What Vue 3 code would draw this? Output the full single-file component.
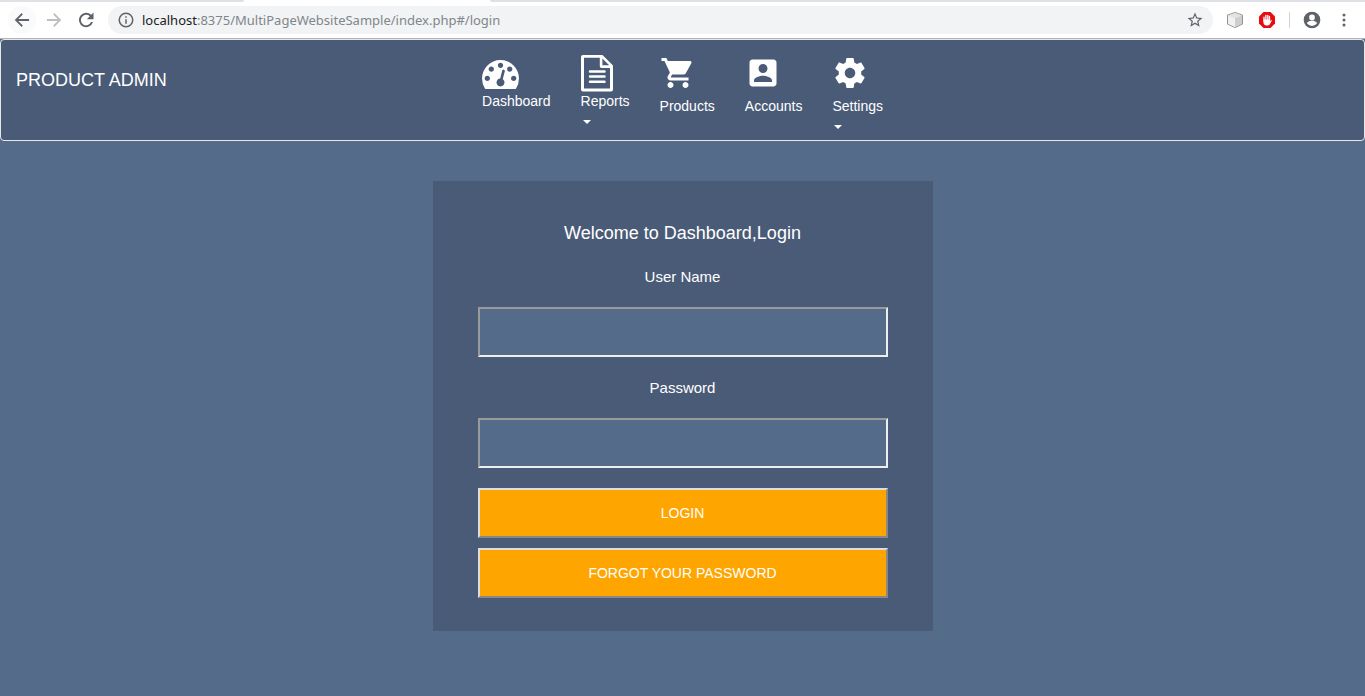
<script setup>
import { ref } from 'vue'

const username = ref('')
const password = ref('')

const navItems = [
  { label: 'Dashboard', icon: 'gauge' },
  { label: 'Reports', icon: 'file', menu: true },
  { label: 'Products', icon: 'cart', material: true },
  { label: 'Accounts', icon: 'account', material: true },
  { label: 'Settings', icon: 'cog', material: true, menu: true },
]
</script>

<template>
  <div class="window">
    <div class="tabstrip"><span class="tab-gap"></span><span class="tab-active"></span><span class="tab-rest"></span></div>
    <div class="toolbar">
      <button class="tool back" type="button" aria-label="Back">
        <svg width="20" height="20" viewBox="0 0 24 24" fill="#5f6368"><path d="M20.500 10.800H7.500l5.500-5.500L11.600 3.700 3.300 12l8.300 8.300 1.400-1.600-5.500-5.500h13z" /></svg>
      </button>
      <button class="tool" type="button" aria-label="Forward">
        <svg width="20" height="20" viewBox="0 0 24 24" fill="#bcbec0"><path d="M3.500 10.800h13L11 5.300l1.400-1.600 8.300 8.300-8.300 8.300-1.400-1.600 5.500-5.500h-13z" /></svg>
      </button>
      <button class="tool" type="button" aria-label="Reload">
        <svg width="20" height="20" viewBox="0 0 24 24" fill="#5f6368"><path d="M18.200 5.800A8.600 8.600 0 1 0 20.400 14.500H18A6.300 6.300 0 1 1 16.500 7.500L13 11h8V3z" /></svg>
      </button>
      <div class="address">
        <svg width="18" height="18" viewBox="0 0 24 24" fill="#5f6368"><path d="M11 7h2v2h-2zm0 4h2v6h-2zm1-9a10 10 0 1 0 0 20 10 10 0 0 0 0-20zm0 18a8 8 0 1 1 0-16 8 8 0 0 1 0 16z" /></svg>
        <span class="url"><span class="host">localhost</span>:8375/MultiPageWebsiteSample/index.php#/login</span>
        <button class="star" type="button" aria-label="Bookmark">
          <svg width="18" height="18" viewBox="0 0 24 24" fill="#5f6368"><path d="M22 9.240l-7.190-.620L12 2 9.190 8.630 2 9.240l5.460 4.730L5.820 21 12 17.270 18.180 21l-1.630-7.030zM12 15.400l-3.760 2.270 1-4.280-3.320-2.880 4.380-.380L12 6.100l1.710 4.040 4.380.380-3.320 2.880 1 4.280z" /></svg>
        </button>
      </div>
      <button class="ext cube" type="button" aria-label="Cube extension">
        <svg width="18" height="18" viewBox="0 0 18 18"><path d="M9 1.500l7.500 2.600v9L9 16.500l-7.500-3.400v-9z" fill="#e4e4e4" stroke="#929292" /><path d="M2 4.400L9 7v9l-7-3.200z" fill="#f1f1f1" /><path d="M9 7l7-2.600v8.400L9 16z" fill="#cecece" /><path d="M9 2l7 2.400L9 7 2 4.400z" fill="#e3e3e3" /></svg>
      </button>
      <button class="ext" type="button" aria-label="Content blocker">
        <svg width="18" height="18" viewBox="0 0 18 18"><path d="M5.500 1h7L17 5.500v7L12.500 17h-7L1 12.500v-7z" fill="#e60c10" /><path d="M6 10V6.200M7.900 9V4.500M9.800 9V4.300M11.500 9.500V5.500" stroke="#fff" stroke-width="1.300" stroke-linecap="round" /><path d="M5.400 8.500h6.700v2l.8-1.200q.8-.6 1 .2L12 13q-.7 1.600-2.600 1.600H8.700Q5.400 14.400 5.400 11z" fill="#fff" /></svg>
      </button>
      <span class="divider"></span>
      <button class="ext profile" type="button" aria-label="Profile">
        <svg width="20" height="20" viewBox="0 0 24 24" fill="#5f6368"><path d="M12 2a10 10 0 1 0 0 20 10 10 0 0 0 0-20zm0 3.500a3.400 3.400 0 1 1 0 6.800 3.400 3.400 0 0 1 0-6.800zm0 13.700a7.200 7.200 0 0 1-6-3.220c.03-1.990 4-3.080 6-3.080s5.970 1.090 6 3.080a7.200 7.200 0 0 1-6 3.220z" /></svg>
      </button>
      <button class="ext more" type="button" aria-label="More">
        <svg width="16" height="16" viewBox="0 0 16 16" fill="#5f6368"><circle cx="8" cy="3" r="1.500" /><circle cx="8" cy="8" r="1.500" /><circle cx="8" cy="13" r="1.500" /></svg>
      </button>
    </div>

    <header class="navbar">
      <a class="brand" href="#/">PRODUCT ADMIN</a>
      <nav>
        <ul class="nav">
          <li v-for="item in navItems" :key="item.label">
            <a href="#/" :class="{ material: item.material }">
              <svg v-if="item.icon === 'gauge'" class="icon gauge" viewBox="0 256 1792 1408"><path d="M384 1152q0-53-37.500-90.500t-90.500-37.500-90.500 37.500-37.500 90.500 37.500 90.500 90.500 37.500 90.500-37.500 37.500-90.500zm192-448q0-53-37.500-90.500t-90.500-37.500-90.500 37.500-37.500 90.500 37.500 90.500 90.500 37.500 90.500-37.500 37.500-90.500zm428 481l101-382q6-26-7.500-48.500t-38.500-29.500-48 6.500-30 39.500l-101 382q-60 5-107 43.500t-63 98.500q-20 77 20 146t117 89 146-20 89-117q16-60-6-117t-72-91zm660-33q0-53-37.500-90.500t-90.500-37.500-90.500 37.500-37.500 90.500 37.500 90.500 90.500 37.500 90.500-37.500 37.500-90.500zm-640-640q0-53-37.500-90.500t-90.500-37.500-90.500 37.500-37.500 90.500 37.500 90.500 90.500 37.500 90.500-37.500 37.500-90.500zm448 192q0-53-37.500-90.500t-90.500-37.500-90.500 37.500-37.500 90.500 37.500 90.500 90.500 37.500 90.500-37.500 37.500-90.500zm320 448q0 261-141 483-19 29-54 29h-1402q-35 0-54-29-141-221-141-483 0-182 71-348t191-286 286-191 348-71 348 71 286 191 191 286 71 348z" /></svg>
              <svg v-else-if="item.icon === 'file'" class="icon" viewBox="0 0 36 36"><path fill-rule="evenodd" d="M2 0H21.500L32 10.500V34.500Q32 36.500 30 36.500H2Q0 36.500 0 34.500V2Q0 0 2 0zM3 2.800V33.600H29V13H20.500Q18.800 13 18.800 11.300V2.800zM21.400 3.600V10.300H28.200z" /><path d="M9 16.500H23.500M9 21.500H23.500M9 26.800H23.500" stroke="#fff" stroke-width="2.500" stroke-linecap="round" /></svg>
              <svg v-else-if="item.icon === 'cart'" class="icon" viewBox="0 0 24 24"><path d="M7 18c-1.100 0-1.990.900-1.990 2S5.900 22 7 22s2-.900 2-2-.900-2-2-2zM1 2v2h2l3.600 7.590-1.350 2.450c-.160.280-.250.610-.250.960 0 1.100.900 2 2 2h12v-2H7.420c-.140 0-.250-.110-.250-.250l.030-.120.900-1.630h7.450c.750 0 1.410-.410 1.750-1.030l3.580-6.490c.080-.140.120-.310.120-.480 0-.550-.450-1-1-1H5.210l-.940-2H1zm16 16c-1.100 0-1.990.900-1.990 2s.890 2 1.990 2 2-.900 2-2-.900-2-2-2z" /></svg>
              <svg v-else-if="item.icon === 'account'" class="icon" viewBox="0 0 24 24"><path d="M3 5v14c0 1.100.890 2 2 2h14c1.100 0 2-.900 2-2V5c0-1.100-.900-2-2-2H5c-1.110 0-2 .900-2 2zm12 4c0 1.660-1.340 3-3 3s-3-1.340-3-3 1.340-3 3-3 3 1.340 3 3zm-9 8c0-2 4-3.100 6-3.100s6 1.100 6 3.100v1H6v-1z" /></svg>
              <svg v-else class="icon" viewBox="0 0 24 24"><path d="M19.430 12.980c.040-.320.070-.640.070-.980s-.030-.660-.070-.980l2.110-1.650c.190-.150.240-.420.120-.640l-2-3.460c-.120-.220-.390-.300-.610-.220l-2.490 1c-.520-.400-1.080-.730-1.690-.980l-.380-2.650C14.460 2.180 14.250 2 14 2h-4c-.250 0-.460.180-.490.420l-.380 2.650c-.610.250-1.170.590-1.690.980l-2.490-1c-.230-.090-.490 0-.610.220l-2 3.460c-.130.220-.070.490.120.640l2.110 1.650c-.040.320-.070.650-.070.980s.030.660.070.980l-2.110 1.650c-.190.150-.240.420-.120.640l2 3.460c.120.220.390.300.610.220l2.490-1c.520.400 1.080.730 1.690.980l.380 2.650c.030.240.240.420.490.420h4c.250 0 .460-.180.490-.420l.380-2.650c.610-.250 1.170-.590 1.690-.980l2.490 1c.230.090.490 0 .610-.220l2-3.460c.120-.220.070-.490-.120-.640l-2.110-1.650zM12 15.500c-1.930 0-3.500-1.570-3.500-3.500s1.570-3.500 3.500-3.500 3.500 1.570 3.500 3.500-1.570 3.500-3.500 3.500z" /></svg>
              <span>{{ item.label }}</span>
              <span v-if="item.menu" class="caret"></span>
            </a>
          </li>
        </ul>
      </nav>
    </header>

    <main>
      <form class="login" @submit.prevent>
        <h1>Welcome to Dashboard,Login</h1>
        <label for="username">User Name</label>
        <input id="username" v-model="username" type="text" />
        <label for="password">Password</label>
        <input id="password" v-model="password" type="password" />
        <button class="action" type="submit">LOGIN</button>
        <button class="action" type="button">FORGOT YOUR PASSWORD</button>
      </form>
    </main>
  </div>
</template>

<style>
body {
  background: #556b8a;
}
</style>

<style scoped>
.window {
  min-height: 100vh;
  background: #556b8a;
  color: #fff;
  font-family: "Liberation Sans", Arial, sans-serif;
  font-size: 14px;
  line-height: 20px;
}
svg {
  display: block;
}
button {
  font-family: inherit;
  cursor: pointer;
}
.tabstrip {
  display: flex;
  height: 2px;
  background: #fff;
}
.tab-gap,
.tab-rest {
  background: #dee1e6;
}
.tab-gap {
  width: 244px;
  border-bottom-right-radius: 2px;
}
.tab-active {
  width: 246px;
}
.tab-rest {
  flex: 1;
  border-bottom-left-radius: 2px;
}
.toolbar {
  display: flex;
  align-items: center;
  height: 36px;
  padding: 0 13px 0 8px;
  background: #fff;
  border-bottom: 1px solid #b3b3b3;
}
.tool,
.ext,
.star {
  display: flex;
  align-items: center;
  justify-content: center;
  flex: none;
  padding: 0;
  border: 0;
  background: none;
}
.tool {
  width: 28px;
  height: 28px;
  margin-right: 4px;
  border-radius: 14px;
}
.back {
  background: #fafafa;
}
.address {
  display: flex;
  align-items: center;
  flex: 1;
  height: 28px;
  margin-left: 4px;
  padding: 0 9px;
  border-radius: 14px;
  background: #f1f3f4;
}
.url {
  flex: 1;
  margin-left: 7px;
  color: #80868b;
  font-family: "Noto Sans", "Open Sans", sans-serif;
  font-size: 13px;
}
.host {
  color: #202124;
}
.ext {
  width: 20px;
  height: 28px;
  margin-left: 12px;
}
.divider {
  width: 1px;
  height: 16px;
  margin-left: 12px;
  background: #d0d2d5;
}
.more {
  width: 16px;
  margin-left: 14px;
}
.navbar {
  display: grid;
  grid-template-columns: 1fr auto 1fr;
  border: 1px solid #e7e7e7;
  border-radius: 4px;
  background: #4a5b77;
}
.navbar a {
  color: #fff;
  text-decoration: none;
}
.brand {
  justify-self: start;
  padding: 30px 15px;
  font-size: 18px;
}
.nav {
  display: flex;
  margin: 0;
  padding: 0;
  list-style: none;
}
.nav a {
  display: flex;
  flex-direction: column;
  padding: 15px 15px 4px;
}
.icon {
  width: 36px;
  height: 36px;
  overflow: visible;
  fill: #fff;
}
.gauge {
  width: 37px;
  height: 29px;
  margin: 5px 0 2px;
}
.material .icon {
  margin-bottom: 5px;
}
.caret {
  align-self: flex-start;
  margin: 9px 2px 7px;
  border-top: 4px solid #fff;
  border-right: 4px solid transparent;
  border-left: 4px solid transparent;
}
main {
  padding: 40px 20px;
}
.login {
  display: flex;
  flex-direction: column;
  box-sizing: border-box;
  max-width: 500px;
  margin: 0 auto;
  padding: 40px 45px 33px;
  background: #4a5b77;
  text-align: center;
}
h1 {
  margin: 0 0 20px;
  font-size: 18px;
  font-weight: 400;
  line-height: 25px;
}
label {
  margin-bottom: 20px;
  font-size: 15px;
  line-height: 21px;
}
input {
  box-sizing: border-box;
  height: 50px;
  margin: 0 0 20px;
  padding: 2px 10px;
  border: 2px solid;
  border-color: #9a9a9a #eee #eee #9a9a9a;
  background: #556b8a;
  color: #fff;
  font: inherit;
}
.action {
  height: 50px;
  border: 2px solid;
  border-color: #ddd #888 #888 #ddd;
  background: #ffa500;
  color: #fff;
  font-size: 14px;
}
.action + .action {
  margin-top: 10px;
}
</style>
